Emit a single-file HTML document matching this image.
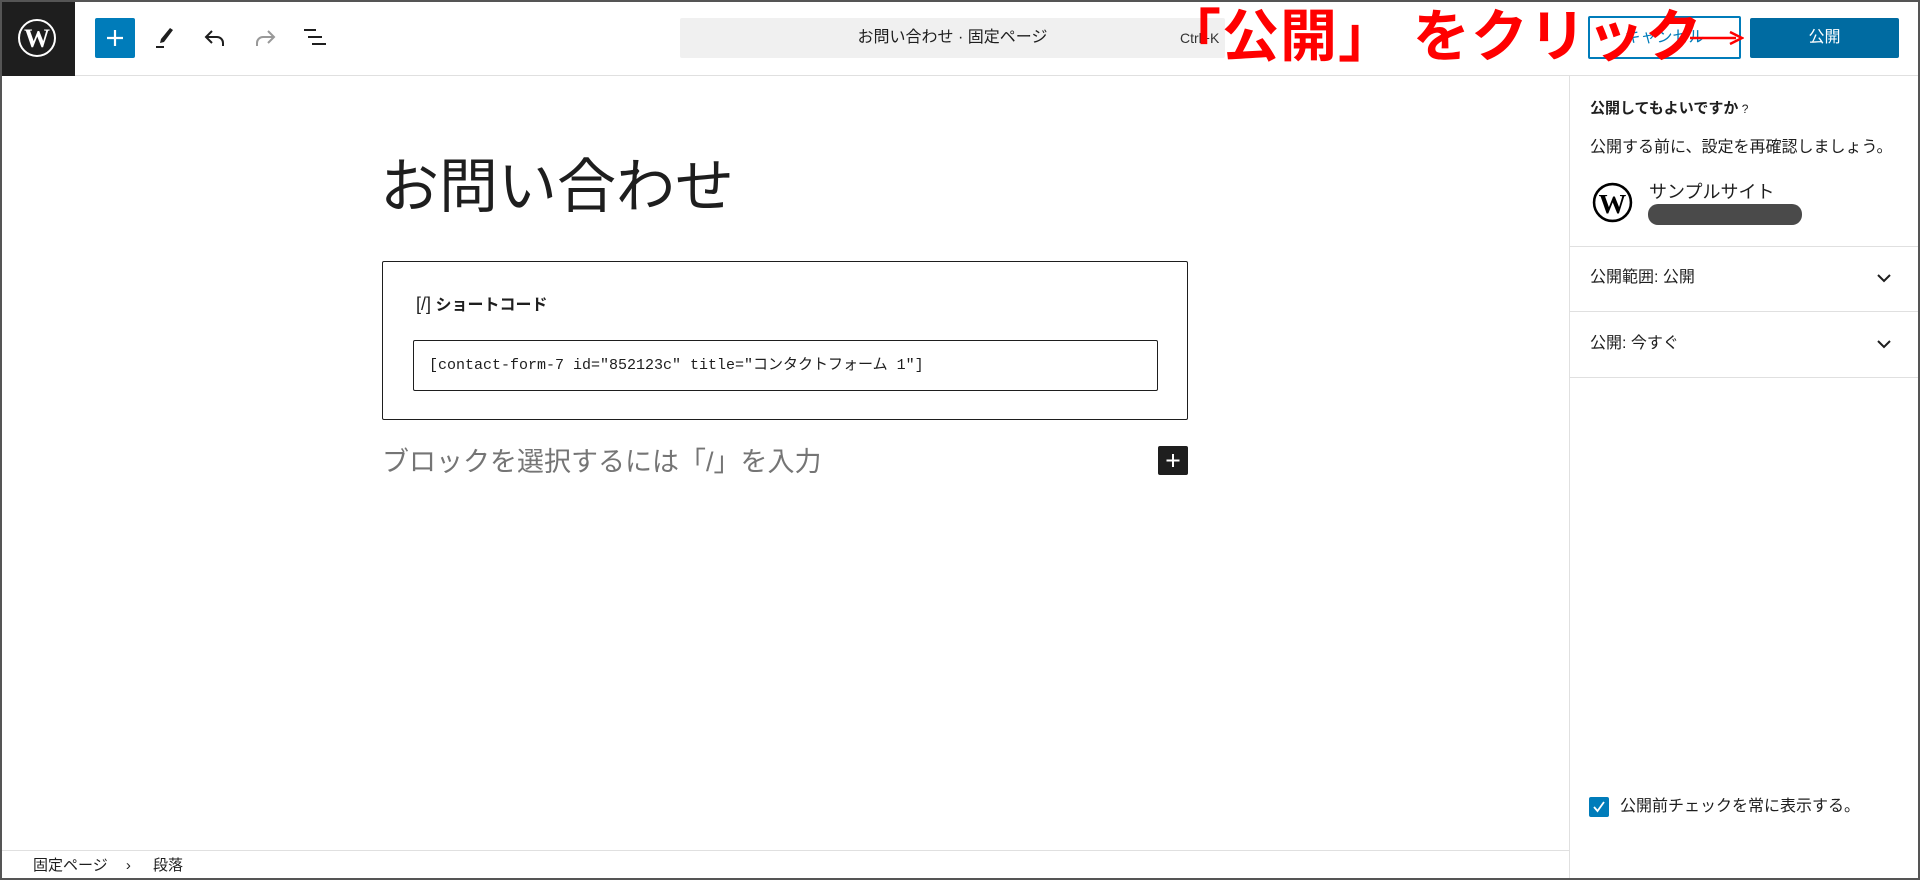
<!DOCTYPE html>
<html><head><meta charset="utf-8"><style>
*{box-sizing:border-box;margin:0;padding:0}
body{width:1920px;height:880px;position:relative;overflow:hidden;background:#fff;font-family:"Liberation Sans","Noto Sans CJK JP",sans-serif;color:#1e1e1e}
.a{position:absolute}
.frame{left:0;top:0;width:1920px;height:880px;border:2px solid #555;border-top-width:2px;z-index:10;pointer-events:none}
</style></head><body>
<div class="a frame"></div>
<!-- top bar -->
<div class="a" style="left:0;top:0;width:1920px;height:76px;border-bottom:1px solid #e0e0e0"></div>
<div class="a" style="left:0;top:0;width:75px;height:76px;background:#1e1e1e"></div>
<svg class="a" style="left:17px;top:18px" width="40" height="40" viewBox="0 0 40 40"><circle cx="20" cy="20" r="18" fill="none" stroke="#fff" stroke-width="2"/><text x="20" y="29" text-anchor="middle" font-family="Liberation Serif,serif" font-weight="bold" font-size="26" fill="#fff">W</text></svg>
<div class="a" style="left:95px;top:18px;width:40px;height:40px;background:#007cba;border-radius:2px"></div>
<svg class="a" style="left:95px;top:18px" width="40" height="40"><path d="M20 12v16M12 20h16" stroke="#fff" stroke-width="2.2"/></svg>
<svg class="a" style="left:152px;top:26px" width="24" height="24" viewBox="0 0 24 24"><path d="M18 2l3 2-9 12-4 1 1-4z" fill="#1e1e1e"/><path d="M4 21h8" stroke="#1e1e1e" stroke-width="2"/></svg>
<svg class="a" style="left:202px;top:26px" width="26" height="24" viewBox="0 0 26 24"><path d="M10 5L4 11l6 6M4 11h11a6 6 0 0 1 6 6v3" fill="none" stroke="#1e1e1e" stroke-width="2"/></svg>
<svg class="a" style="left:252px;top:26px" width="26" height="24" viewBox="0 0 26 24"><path d="M16 5l6 6-6 6M22 11H11a6 6 0 0 0-6 6v3" fill="none" stroke="#999" stroke-width="2"/></svg>
<svg class="a" style="left:302px;top:26px" width="28" height="24" viewBox="0 0 28 24"><path d="M2 4h12M6 11h14M10 18h14" stroke="#1e1e1e" stroke-width="2"/></svg>
<div class="a" style="left:680px;top:18px;width:545px;height:40px;background:#f0f0f0;border-radius:2px"></div>
<div class="a" style="left:680px;top:18px;width:545px;height:40px;line-height:40px;text-align:center;font-size:16px">お問い合わせ · 固定ページ</div>
<div class="a" style="left:1180px;top:18px;line-height:40px;font-size:14px;color:#333">Ctrl+K</div>
<div class="a" style="left:1588px;top:16px;width:153px;height:43px;border:2px solid #007cba;border-radius:2px;color:#007cba;font-size:16px;line-height:39px;text-align:center">キャンセル</div>
<div class="a" style="left:1750px;top:18px;width:149px;height:40px;background:#006ba1;border-radius:2px;color:#fff;font-size:16px;line-height:40px;text-align:center">公開</div>
<div class="a" style="left:1164px;top:4px;font-size:57px;line-height:66px;font-weight:bold;color:#f00;letter-spacing:1px;white-space:nowrap">「公開」 をクリック</div>
<svg class="a" style="left:1690px;top:30px" width="54" height="16"><path d="M0 8h46" stroke="#f00" stroke-width="2.5"/><path d="M40 2l12 6-12 6" fill="none" stroke="#f00" stroke-width="2.5"/></svg>
<!-- sidebar -->
<div class="a" style="left:1569px;top:76px;width:1px;height:804px;background:#e0e0e0"></div>
<div class="a" style="left:1590px;top:98px;font-size:15px;font-weight:bold;line-height:22px">公開してもよいですか<span style="font-size:12px;font-weight:normal"> ?</span></div>
<div class="a" style="left:1590px;top:136px;font-size:16px;line-height:24px">公開する前に、設定を再確認しましょう。</div>
<svg class="a" style="left:1592px;top:182px" width="41" height="41" viewBox="0 0 40 40"><circle cx="20" cy="20" r="18" fill="none" stroke="#000" stroke-width="2.5"/><text x="20" y="30" text-anchor="middle" font-family="Liberation Serif,serif" font-weight="bold" font-size="27" fill="#000">W</text></svg>
<div class="a" style="left:1649px;top:180px;font-size:18px;line-height:24px">サンプルサイト</div>
<div class="a" style="left:1648px;top:204px;width:154px;height:21px;background:#4a4a4a;border-radius:10px"></div>
<div class="a" style="left:1570px;top:246px;width:350px;height:1px;background:#e0e0e0"></div>
<div class="a" style="left:1590px;top:266px;font-size:16px;line-height:24px">公開範囲: 公開</div>
<svg class="a" style="left:1876px;top:271px" width="16" height="14"><path d="M2 4l6 6 6-6" fill="none" stroke="#1e1e1e" stroke-width="2"/></svg>
<div class="a" style="left:1570px;top:311px;width:350px;height:1px;background:#e0e0e0"></div>
<div class="a" style="left:1590px;top:332px;font-size:16px;line-height:24px">公開: 今すぐ</div>
<svg class="a" style="left:1876px;top:337px" width="16" height="14"><path d="M2 4l6 6 6-6" fill="none" stroke="#1e1e1e" stroke-width="2"/></svg>
<div class="a" style="left:1570px;top:377px;width:350px;height:1px;background:#e0e0e0"></div>
<div class="a" style="left:1589px;top:797px;width:20px;height:20px;background:#007cba;border-radius:2px"></div>
<svg class="a" style="left:1589px;top:797px" width="20" height="20"><path d="M5 10l3.5 4L15 5" fill="none" stroke="#fff" stroke-width="1.8"/></svg>
<div class="a" style="left:1620px;top:795px;font-size:16px;line-height:24px">公開前チェックを常に表示する。</div>
<!-- editor -->
<div class="a" style="left:380px;top:151px;font-size:59px;line-height:72px;white-space:nowrap">お問い合わせ</div>
<div class="a" style="left:382px;top:261px;width:806px;height:159px;border:1px solid #1e1e1e;border-radius:2px"></div>
<div class="a" style="left:416px;top:292px;font-size:16px;line-height:24px"><span style="font-size:18px">[/]</span> <b>ショートコード</b></div>
<div class="a" style="left:413px;top:340px;width:745px;height:51px;border:1px solid #1e1e1e;border-radius:2px"></div>
<div class="a" style="left:429px;top:355px;font-family:'Liberation Mono','Noto Sans CJK JP',monospace;font-size:15px;line-height:22px;white-space:nowrap">[contact-form-7 id="852123c" title="コンタクトフォーム 1"]</div>
<div class="a" style="left:382px;top:445px;font-size:27px;line-height:34px;color:#757575;white-space:nowrap">ブロックを選択するには「/」を入力</div>
<div class="a" style="left:1158px;top:446px;width:30px;height:29px;background:#1e1e1e;border-radius:2px"></div>
<svg class="a" style="left:1158px;top:446px" width="30" height="29"><path d="M15 8v13M8.5 14.5h13" stroke="#fff" stroke-width="2"/></svg>
<!-- footer -->
<div class="a" style="left:0;top:850px;width:1569px;height:1px;background:#e0e0e0"></div>
<div class="a" style="left:33px;top:854px;font-size:15px;line-height:24px;white-space:nowrap">固定ページ <span style="display:inline-block;margin:0 18px 0 14px">›</span> 段落</div>
</body></html>
